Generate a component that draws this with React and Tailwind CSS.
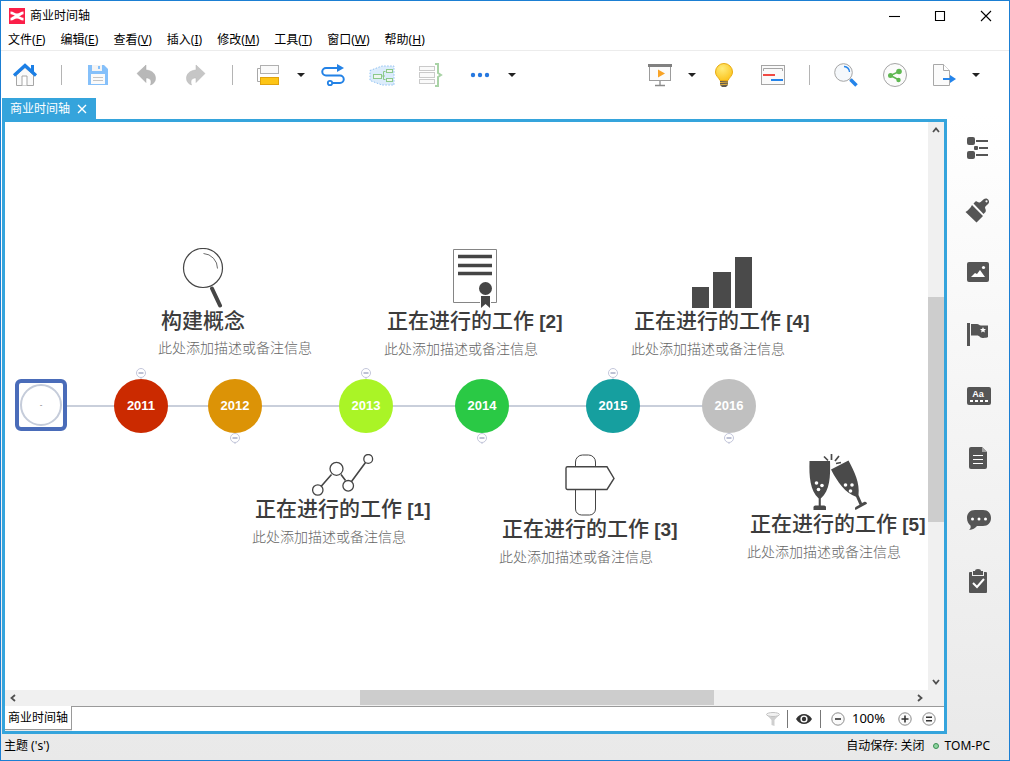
import { useState } from 'react'

const MENUS = [
  ['文件', 'F'],
  ['编辑', 'E'],
  ['查看', 'V'],
  ['插入', 'I'],
  ['修改', 'M'],
  ['工具', 'T'],
  ['窗口', 'W'],
  ['帮助', 'H'],
]

/* ---------- 工具栏图标（28x28） ---------- */

function Icon({ children }) {
  return (
    <svg viewBox="0 0 28 28" className="block h-7 w-7" fill="none" aria-hidden="true">
      {children}
    </svg>
  )
}

const HomeIcon = () => (
  <Icon>
    <path d="M5.500 14v10.500h17V14L14 6.500z" fill="#fafafa" stroke="#a6a6a6" />
    <path d="M11 24.500v-9.500h5v9.500" fill="#fff" stroke="#a6a6a6" />
    <path d="M20 4h3v7h-3z" fill="#1b7fe6" />
    <path d="M3 14.500 14 4.500l11 10" stroke="#1b7fe6" strokeWidth="3.200" />
  </Icon>
)

const SaveIcon = () => (
  <Icon>
    <path d="M4 4h16l4 4v16H4z" fill="#85c0fa" />
    <path d="M8 4h10v6H8z" fill="#f4f4f4" />
    <path d="M14 5h2v3h-2z" fill="#85c0fa" />
    <path d="M7 13h14v10H7z" fill="#fafafa" />
    <path d="M9 16.500h10M9 19.500h10" stroke="#c4c4c4" />
  </Icon>
)

const UNDO_PATH = 'M4 12.500 13 4v5c6.500.5 9.500 4 9.500 8.500 0 3-2 5.500-5 6.500 1.500-4.500 0-7-4.500-7v4.500z'

const UndoIcon = () => (
  <Icon>
    <path d={UNDO_PATH} fill="#b8b8b8" stroke="#a8a8a8" strokeWidth="0.500" />
  </Icon>
)

const RedoIcon = () => (
  <Icon>
    <g transform="translate(27 0) scale(-1 1)">
      <path d={UNDO_PATH} fill="#c6c6c6" stroke="#b4b4b4" strokeWidth="0.500" />
    </g>
  </Icon>
)

const TopicIcon = () => (
  <Icon>
    <path d="M6 7.500H2.500v13H6" stroke="#a8a8a8" />
    <rect x="5.500" y="4.500" width="18" height="8" fill="#fafafa" stroke="#b0b0b0" />
    <rect x="5.500" y="16.500" width="18" height="7" fill="#fdc516" stroke="#e0a20c" />
  </Icon>
)

const RelationIcon = () => (
  <Icon>
    <path
      d="M20 7H7a3.700 3.700 0 0 0 0 7.500h14a3.700 3.700 0 0 1 0 7.500H13"
      stroke="#2382e6"
      strokeWidth="2"
    />
    <path d="M18 3l7 4-7 4z" fill="#2382e6" />
    <circle cx="11" cy="22" r="2.200" fill="#fff" stroke="#2382e6" strokeWidth="1.800" />
  </Icon>
)

const BoundaryIcon = () => (
  <Icon>
    <path d="M2 9.500 14 5h12v19H14L2 19.500z" fill="#dcecfb" stroke="#8fc1f2" strokeDasharray="1.500 1.500" />
    <path d="M14 15h3M17.500 10.500h-2v8h2" stroke="#8cc98a" />
    <rect x="5.500" y="13.500" width="8" height="4" fill="#eef6ee" stroke="#8cc98a" />
    <rect x="18.500" y="8.500" width="6" height="3" fill="#eef6ee" stroke="#8cc98a" />
    <rect x="18.500" y="17.500" width="6" height="3" fill="#eef6ee" stroke="#8cc98a" />
  </Icon>
)

const SummaryIcon = () => (
  <Icon>
    <rect x="2.500" y="5.500" width="15" height="4" fill="#fafafa" stroke="#cacaca" />
    <rect x="2.500" y="11.500" width="15" height="5" fill="#fafafa" stroke="#cacaca" />
    <rect x="2.500" y="18.500" width="15" height="4" fill="#fafafa" stroke="#cacaca" />
    <path d="M18 3h3v9l3 2-3 2v9h-3" stroke="#a9d3a6" strokeWidth="2" />
  </Icon>
)

const MoreIcon = () => (
  <Icon>
    <circle cx="7" cy="14" r="2.200" fill="#2678e0" />
    <circle cx="14" cy="14" r="2.200" fill="#2678e0" />
    <circle cx="21" cy="14" r="2.200" fill="#2678e0" />
  </Icon>
)

const PresentIcon = () => (
  <Icon>
    <rect x="3.500" y="5.500" width="21" height="14" fill="#fbfbfb" stroke="#9c9c9c" />
    <path d="M2 3h24v3H2z" fill="#808080" />
    <path d="M12 8.500v8l7-4z" fill="#f8a326" />
    <path d="M14 20v4.500M9 24.500h10" stroke="#8a8a8a" strokeWidth="1.300" />
  </Icon>
)

const BulbIcon = () => (
  <Icon>
    <defs>
      <radialGradient id="bulb" cx="0.4" cy="0.3" r="0.8">
        <stop offset="0" stopColor="#ffec7a" />
        <stop offset="1" stopColor="#fbc014" />
      </radialGradient>
    </defs>
    <path
      d="M14 2.500a8.500 8.500 0 0 0-8.500 8.500c0 4 3 5 4.500 8.500h8c1.500-3.500 4.500-4.500 4.500-8.500A8.500 8.500 0 0 0 14 2.500z"
      fill="url(#bulb)"
      stroke="#e9ac14"
    />
    <path d="M10 20h8v4l-2 2h-4l-2-2z" fill="#5f5a50" />
    <path d="M10 21.500l8-.5M10 23.800l8-.6" stroke="#e6b23c" />
  </Icon>
)

const CardIcon = () => (
  <Icon>
    <rect x="2.500" y="4.500" width="23" height="19" fill="#fafafa" stroke="#a5a5a5" />
    <path d="M4.500 10V7.500h19V10" stroke="#a5a5a5" />
    <path d="M4 14h12" stroke="#f04a43" strokeWidth="2" />
    <path d="M12 19h12" stroke="#2484ea" strokeWidth="2" />
  </Icon>
)

const SearchIcon = () => (
  <Icon>
    <path d="M18 18l2 2" stroke="#a5a5a5" strokeWidth="2" />
    <circle cx="11.500" cy="11.500" r="8.800" fill="#f5f8fb" stroke="#a5a5a5" />
    <path d="M12 5.500a6 6 0 0 1 5.500 5.500" stroke="#2484ea" strokeWidth="1.300" />
    <path d="M18.500 18.500l6 6" stroke="#2484ea" strokeWidth="3.500" />
  </Icon>
)

const ShareIcon = () => (
  <Icon>
    <circle cx="14" cy="14" r="11.500" fill="#fbfbfb" stroke="#a5a5a5" />
    <path d="M18 10.500 9.500 14.500l8.500 4.500" stroke="#5fb852" strokeWidth="1.500" />
    <circle cx="18" cy="10.500" r="2.800" fill="#5fb852" />
    <circle cx="9.500" cy="14.500" r="2.500" fill="#5fb852" />
    <circle cx="17.500" cy="19" r="2.200" fill="#5fb852" />
  </Icon>
)

const ExportIcon = () => (
  <Icon>
    <path d="M3.500 3.500h10l6 6v15h-16z" fill="#fbfbfb" stroke="#a8a8a8" />
    <path d="M13.500 3.500v6h6" fill="#fff" stroke="#a8a8a8" />
    <path d="M13 18h8" stroke="#2484ea" strokeWidth="2" />
    <path d="M20 14l6 4-6 4z" fill="#2484ea" />
  </Icon>
)

const TOOLS_LEFT = [
  ['主页', HomeIcon],
  '|',
  ['保存', SaveIcon],
  ['撤销', UndoIcon],
  ['重做', RedoIcon],
  '|',
  ['主题', TopicIcon],
  'v',
  ['联系', RelationIcon],
  ['外框', BoundaryIcon],
  ['概要', SummaryIcon],
  ['更多', MoreIcon],
  'v',
]

const TOOLS_RIGHT = [
  ['演示', PresentIcon],
  'v',
  ['头脑风暴', BulbIcon],
  ['甘特图', CardIcon],
  '|',
  ['搜索', SearchIcon],
  ['分享', ShareIcon],
  ['导出', ExportIcon],
  'v',
]

function ToolGroup({ tools }) {
  return (
    <div className="flex items-center gap-[21px]">
      {tools.map((tool, i) => {
        if (tool === '|') {
          return <span key={i} className="mx-px h-5 w-px bg-[#b4b4b4]" />
        }
        if (tool === 'v') {
          return (
            <button key={i} aria-label="展开" className="-mx-2 flex w-[10px] justify-center">
              <svg viewBox="0 0 8 4" className="h-1 w-2">
                <path d="M0 0h8L4 4z" fill="#222" />
              </svg>
            </button>
          )
        }
        const [label, Glyph] = tool
        return (
          <button key={i} aria-label={label} title={label}>
            <Glyph />
          </button>
        )
      })}
    </div>
  )
}

/* ---------- 右侧面板图标 ---------- */

const PANELS = [
  [
    '大纲',
    <g fill="#555">
      <rect x="2" y="2" width="8" height="8" rx="2" />
      <rect x="9" y="11" width="4" height="4" rx="1" />
      <rect x="2" y="16" width="8" height="8" rx="2" />
      <path d="M11 5h12v2H11zM14 12h9v2h-9zM11 19h12v2H11z" />
    </g>,
  ],
  [
    '格式',
    <g fill="#555">
      <path d="M7 8 18 19l-6.500 6.500L.5 15c2.500-1.500 5-4 6.500-7z" />
      <path d="M8.500 6.500l2-2C12 3.500 13 6 14.500 5.500S17.500 3 19 2c3-2 6.500 1.500 4.500 4.500-1 1.500-3.500 2.500-3.500 4s1.500 2.500.5 4.500l-2 2z" />
      <circle cx="21.500" cy="4.300" r="1.100" fill="#f8f8f8" />
    </g>,
  ],
  [
    '图片',
    <g>
      <rect x="2" y="3" width="22" height="20" rx="2" fill="#555" />
      <path d="M6 18l4-4 2 1 3-4 5 7z" fill="#fff" />
      <circle cx="18.500" cy="8.500" r="1.600" fill="#fff" />
    </g>,
  ],
  [
    '图标',
    <g fill="#555">
      <path d="M2 2h3v23H2z" />
      <path d="M6 3h6c2 0 2 1.500 4 1.500h7V16c-2 1-6 1.500-8 0-1-1-1.500-1.500-3-1.500H6z" />
      <path d="M18 6l.9 1.900 2.100.2-1.600 1.400.5 2.100-1.900-1.100-1.900 1.100.5-2.100L15 8.100l2.100-.2z" fill="#fff" />
    </g>,
  ],
  [
    '标签',
    <g>
      <rect x="2" y="4" width="24" height="18" rx="2" fill="#555" />
      <text
        x="13"
        y="14"
        textAnchor="middle"
        fill="#fff"
        fontSize="9"
        fontWeight="bold"
        fontFamily="Liberation Sans, sans-serif"
      >
        Aa
      </text>
      <path d="M5 18h18" stroke="#fff" strokeWidth="2" strokeDasharray="3 2" />
    </g>,
  ],
  [
    '备注',
    <g>
      <path d="M6 2h11l5 5v15a2 2 0 0 1-2 2H6a2 2 0 0 1-2-2V4a2 2 0 0 1 2-2z" fill="#555" />
      <path d="M17 2v5h5z" fill="#a3a3a3" />
      <path d="M8 10.500h10M8 14.500h10M8 18.500h10" stroke="#fff" />
    </g>,
  ],
  [
    '评论',
    <g>
      <path
        d="M10 3h8c5 0 8 3.500 8 8s-3 8-8 8h-6c-2 2.500-4 3.500-8 4 1.500-1.200 2-2.500 1.500-4.500C3.500 17 2 14.500 2 11c0-4.500 3-8 8-8z"
        fill="#555"
      />
      <circle cx="7.500" cy="12" r="1.500" fill="#fff" />
      <circle cx="14" cy="12" r="1.500" fill="#fff" />
      <circle cx="20.500" cy="12" r="1.500" fill="#fff" />
    </g>,
  ],
  [
    '任务',
    <g>
      <path d="M4 4a1 1 0 0 1 1-1h2v4h12V3h2a1 1 0 0 1 1 1v19a1 1 0 0 1-1 1H5a1 1 0 0 1-1-1z" fill="#555" />
      <path d="M8 2h2a3 2 0 0 1 6 0h2v4H8z" fill="#555" />
      <path d="M8 14l4 4 7-8" stroke="#fff" strokeWidth="2" fill="none" />
    </g>,
  ],
]

/* ---------- 画布插图 ---------- */

const MagnifierArt = () => (
  <svg width="42" height="60" viewBox="0 0 42 60" fill="none">
    <circle cx="21" cy="20" r="19.500" stroke="#454545" strokeWidth="1.200" />
    <path d="M21.500 5.500a15 15 0 0 1 14 15" stroke="#454545" strokeWidth="0.800" />
    <path d="M30 40.500 38 57.500" stroke="#454545" strokeWidth="4" strokeLinecap="round" />
  </svg>
)

const CertificateArt = () => (
  <svg width="46" height="60" viewBox="0 0 46 60" fill="none">
    <path d="M28 54.500H1.500v-53h43v53H39" stroke="#858585" />
    <path d="M6 8.500h34M6 17.500h34M6 25.500h34" stroke="#454545" strokeWidth="3.500" />
    <circle cx="33.500" cy="40.500" r="6.500" fill="#454545" />
    <path d="M29 48h9v12l-4.500-4L29 60z" fill="#454545" />
  </svg>
)

const BarsArt = () => (
  <svg width="60" height="51" viewBox="0 0 60 51" fill="#4a4a4a">
    <path d="M0 30h17v21H0zM21 15h18v36H21zM43 0h17v51H43z" />
  </svg>
)

const TrendArt = () => (
  <svg width="62" height="42" viewBox="0 0 62 42" fill="none" stroke="#454545" strokeWidth="1.300">
    <path d="M9 32.500 19.500 20.500M29 20.500l4.500 6M39.500 27.500 53.500 8.500" strokeWidth="1.600" />
    <circle cx="5.800" cy="36" r="5.200" />
    <circle cx="24.500" cy="14.800" r="6.500" />
    <circle cx="36.200" cy="31.800" r="5.300" />
    <circle cx="56.200" cy="4.900" r="4.400" />
  </svg>
)

const SignArt = () => (
  <svg width="50" height="62" viewBox="0 0 50 62" fill="none" stroke="#454545">
    <path d="M10.500 12V8a7 7 0 0 1 7-7h6a7 7 0 0 1 7 7v4M10.500 36v19a6 6 0 0 0 6 6h8a6 6 0 0 0 6-6V36" />
    <path
      d="M2.500 12.800h39.500L49 24.500l-7 11H2.500a1.500 1.500 0 0 1-1.500-1.500V14.300a1.500 1.500 0 0 1 1.500-1.500z"
      strokeWidth="1.400"
    />
  </svg>
)

const CheersArt = () => (
  <svg width="58" height="57" viewBox="0 0 58 57" fill="#4a4a4a">
    <path d="M.5 7h20.500C21.500 22 21 37 11.800 44.500v7H15a2 2 0 0 1 2 2.500v2H4.500v-2a2 2 0 0 1 2-2.500h3.200v-7C1 37 0 22 .5 7z" />
    <path d="M22 15.500 39.500 6.500c6 11.500 11.500 22.500 10 34.500l3.500 8 2.500-1.200c1.500-.3 2.300.7 2.500 2L46.500 56c-1-1.500-.5-2.700.5-3.300l3.500-2-3.500-8C36.500 39.500 28.500 28 22 15.500z" />
    <path d="M15 2.500l4 4M22.500 0v6M30 2l-4 5M27 9.500l5-1" stroke="#4a4a4a" strokeWidth="1.700" />
    <g fill="#fff">
      <circle cx="7.500" cy="29" r="1.800" />
      <circle cx="13" cy="31.500" r="1.800" />
      <circle cx="9.500" cy="35.500" r="1.800" />
      <circle cx="36.500" cy="31" r="1.800" />
      <circle cx="43" cy="31" r="1.800" />
      <circle cx="41.500" cy="37" r="1.800" />
    </g>
  </svg>
)

/* ---------- 时间轴数据，坐标相对于画布 ---------- */

const AXIS_Y = 284

const YEARS = [
  { year: 2011, x: 136, color: '#cb2a00', up: true },
  { year: 2012, x: 230, color: '#dc9306', up: false },
  { year: 2013, x: 361, color: '#aaf426', up: true },
  { year: 2014, x: 477, color: '#2ac945', up: false },
  { year: 2015, x: 608, color: '#169f9f', up: true },
  { year: 2016, x: 724, color: '#c0c0c0', up: false },
]

const TOPICS = [
  { title: '构建概念', x: 153, y: 126, Art: MagnifierArt },
  { title: '正在进行的工作', no: '[1]', x: 247, y: 332, Art: TrendArt },
  { title: '正在进行的工作', no: '[2]', x: 379, y: 126, Art: CertificateArt },
  { title: '正在进行的工作', no: '[3]', x: 494, y: 332, Art: SignArt },
  { title: '正在进行的工作', no: '[4]', x: 626, y: 135, Art: BarsArt },
  { title: '正在进行的工作', no: '[5]', x: 742, y: 332, Art: CheersArt },
]

function YearNode({ year, x, color, up }) {
  return (
    <div
      className={`absolute flex w-[54px] -translate-x-1/2 items-center ${
        up ? 'flex-col' : 'flex-col-reverse'
      }`}
      style={{ left: x, top: up ? AXIS_Y - 38 : AXIS_Y - 27 }}
    >
      <button aria-label={`折叠 ${year}`}>
        <svg width="10" height="11" viewBox="0 0 10 11" className="block" fill="none" stroke="#c3c6da">
          <circle cx="5" cy="5" r="4.500" fill="#fff" />
          <path d="M5 9.500V11" />
          <path d="M2.500 5h5" stroke="#7d84ab" />
        </svg>
      </button>
      <div
        className="flex h-[54px] w-[54px] items-center justify-center rounded-full text-[13px] font-bold text-white"
        style={{ backgroundColor: color }}
      >
        {year}
      </div>
    </div>
  )
}

function Topic({ title, no, x, y, Art }) {
  return (
    <div className="absolute whitespace-nowrap" style={{ left: x, top: y }}>
      <div className="ml-[3px] flex w-fit flex-col items-center">
        <Art />
        <h2 className="text-[21px] leading-[26px] font-medium text-[#3c3c3c]">
          {title}
          {no && <span className="text-[19px] font-bold"> {no}</span>}
        </h2>
      </div>
      <p className="text-sm leading-7 font-light text-[#666]">此处添加描述或备注信息</p>
    </div>
  )
}

function Canvas() {
  return (
    <div className="relative min-h-[460px] flex-1 overflow-hidden bg-white font-['Liberation_Sans','Noto_Sans_CJK_SC',sans-serif]">
      <div className="absolute left-[60px] h-[2px] w-[640px] bg-[#c9cfdb]" style={{ top: AXIS_Y - 1 }} />
      <div
        className="absolute left-[10px] flex h-[52px] w-[52px] items-center justify-center rounded-md border-4 border-[#4a6cb9] bg-white"
        style={{ top: AXIS_Y - 27 }}
      >
        <div className="flex h-[42px] w-[42px] shrink-0 items-center justify-center rounded-full border-2 border-[#c5ccda] text-[8px] text-[#777]">
          -
        </div>
      </div>
      {YEARS.map((item) => (
        <YearNode key={item.year} {...item} />
      ))}
      {TOPICS.map((item) => (
        <Topic key={item.x} {...item} />
      ))}
    </div>
  )
}

/* ---------- 滚动条 ---------- */

function Arrow({ d, label }) {
  return (
    <button aria-label={label} className="flex h-4 w-4 shrink-0 items-center justify-center">
      <svg width="8" height="8" viewBox="0 0 8 8" fill="none" stroke="#505050" strokeWidth="1.800">
        <path d={d} />
      </svg>
    </button>
  )
}

function VerticalScrollbar() {
  return (
    <div className="flex w-4 flex-col bg-[#f0f0f0]">
      <Arrow d="M1 6l3-3.500L7 6" label="向上滚动" />
      <div className="flex flex-1 flex-col">
        <div className="flex-[159]" />
        <div className="flex-[225] bg-[#cdcdcd]" />
        <div className="flex-[152]" />
      </div>
      <Arrow d="M1 2l3 3.500L7 2" label="向下滚动" />
    </div>
  )
}

function HorizontalScrollbar() {
  return (
    <div className="flex h-4 bg-[#f0f0f0] pr-4">
      <Arrow d="M6 1L2.500 4 6 7" label="向左滚动" />
      <div className="flex h-[15px] flex-1">
        <div className="flex-[339]" />
        <div className="flex-[354] bg-[#cdcdcd]" />
        <div className="flex-[198]" />
      </div>
      <Arrow d="M2 1l3.500 3L2 7" label="向右滚动" />
    </div>
  )
}

function ZoomButton({ label, d }) {
  return (
    <button aria-label={label}>
      <svg width="14" height="14" viewBox="0 0 14 14" className="block" fill="none">
        <circle cx="7" cy="7" r="6.200" fill="#fafafa" stroke="#8b8b8b" />
        <path d={d} stroke="#333" strokeWidth="1.600" />
      </svg>
    </button>
  )
}

function SheetBar() {
  return (
    <div className="flex h-[25px]">
      <button className="mb-px w-[67px] border-r border-b border-[#9a9a9a] bg-white pl-[3px] text-left whitespace-nowrap">
        商业时间轴
      </button>
      <div className="flex flex-1 items-center justify-end border-t border-[#9a9a9a] bg-white pr-2">
        <button aria-label="筛选" className="mr-[7px]">
          <svg width="14" height="14" viewBox="0 0 14 14" className="block">
            <path d="M.5 2.500 5.500 8v5l3 1V8l5-5.500z" fill="#cfcfcf" />
            <ellipse cx="7" cy="2.500" rx="6.500" ry="2" fill="#f2f2f2" stroke="#c2c2c2" />
          </svg>
        </button>
        <span className="h-[18px] w-px bg-[#777]" />
        <button aria-label="显示" className="mx-2">
          <svg width="16" height="14" viewBox="0 0 16 14" className="block">
            <path d="M0 7c2-3.500 5-5 8-5s6 1.500 8 5c-2 3.500-5 5-8 5S2 10.500 0 7z" fill="#333" />
            <circle cx="8" cy="7" r="3.600" fill="#fff" />
            <circle cx="8" cy="7" r="2.200" fill="#333" />
          </svg>
        </button>
        <span className="mr-[10px] h-[18px] w-px bg-[#777]" />
        <ZoomButton label="缩小" d="M4 7h6" />
        <span className="w-[53px] pl-[7px] text-[13px]">100%</span>
        <ZoomButton label="放大" d="M3.500 7h7M7 3.500v7" />
        <span className="w-[10px]" />
        <ZoomButton label="适合画布" d="M4 5.200h6M4 8.800h6" />
      </div>
    </div>
  )
}

export default function App() {
  const [active, setActive] = useState('')

  return (
    <div className="flex min-h-screen flex-col border border-[#1b7fd3] bg-gradient-to-b from-white from-15% to-[#e9e9e9] font-['Noto_Sans','Noto_Sans_CJK_SC',sans-serif] text-xs text-black">
      {/* 标题栏 */}
      <header className="flex h-[29px] items-center bg-white pl-2">
        <svg width="16" height="16" viewBox="0 0 16 16" className="mr-[5px]">
          <rect width="16" height="16" fill="#fb1f49" />
          <path
            d="M1.500 3.500c3 0 4 2 6.500 2s3.500-2 6.500-2v2.800C13 6.300 12 8 10.500 8s2.500 1.700 4 1.700v2.800c-3 0-4-2-6.500-2s-3.500 2-6.500 2V9.700C3 9.700 4 8 5.500 8S3 6.300 1.500 6.300z"
            fill="#fff"
          />
        </svg>
        <h1>商业时间轴</h1>
        <div className="ml-auto flex">
          {[
            ['最小化', 'M2 7.500h11'],
            ['最大化', 'M2.500 2.500h9v9h-9z'],
            ['关闭', 'M2 2l10 10M12 2 2 12'],
          ].map(([label, d]) => (
            <button key={label} aria-label={label} className="flex w-[46px] justify-center">
              <svg width="14" height="14" viewBox="0 0 14 14" fill="none" stroke="#000" strokeWidth="1.100">
                <path d={d} />
              </svg>
            </button>
          ))}
        </div>
      </header>

      {/* 菜单栏 */}
      <nav className="flex h-[21px] items-center gap-[15px] border-b border-[#ececec] bg-white pl-[7px] whitespace-nowrap">
        {MENUS.map(([name, key]) => (
          <button key={key}>
            {name}(<u className="underline-offset-1">{key}</u>)
          </button>
        ))}
      </nav>

      <div className="flex h-[47px] items-center justify-between pr-9 pl-[10px]">
        <ToolGroup tools={TOOLS_LEFT} />
        <ToolGroup tools={TOOLS_RIGHT} />
      </div>

      <div className="flex flex-1">
        <main className="flex flex-1 flex-col pl-px">
          {/* 文件标签 */}
          <div className="flex h-[21px] w-fit items-center gap-[7px] bg-[#35a4dc] pr-[9px] pl-2 text-white">
            <span className="leading-5 pt-px">商业时间轴</span>
            <button aria-label="关闭标签">
              <svg width="10" height="10" viewBox="0 0 10 10" className="block" stroke="#fff" strokeWidth="1.400">
                <path d="M1 1l8 8M9 1 1 9" />
              </svg>
            </button>
          </div>

          <div className="flex flex-1 flex-col border-3 border-[#35a4dc]">
            <div className="flex flex-1">
              <Canvas />
              <VerticalScrollbar />
            </div>
            <HorizontalScrollbar />
            <SheetBar />
          </div>
        </main>

        {/* 右侧面板 */}
        <aside className="flex w-[62px] flex-col items-center pt-[19px]">
          {PANELS.map(([label, glyph]) => (
            <button
              key={label}
              aria-label={label}
              aria-pressed={active === label}
              onClick={() => setActive(active === label ? '' : label)}
              className="flex h-[62px] w-full items-center justify-center pl-[2px]"
            >
              <svg width="28" height="26" viewBox="0 0 28 26">
                {glyph}
              </svg>
            </button>
          ))}
        </aside>
      </div>

      {/* 状态栏 */}
      <footer className="flex h-[26px] items-center px-[3px] pb-[2px]">
        <span>主题 ('s')</span>
        <span className="mr-2 ml-auto">自动保存: 关闭</span>
        <span className="mr-[6px] h-[6px] w-[6px] rounded-full border border-[#3b8f53] bg-[#8fd4a0]" />
        <span className="mr-4">TOM-PC</span>
      </footer>
    </div>
  )
}
